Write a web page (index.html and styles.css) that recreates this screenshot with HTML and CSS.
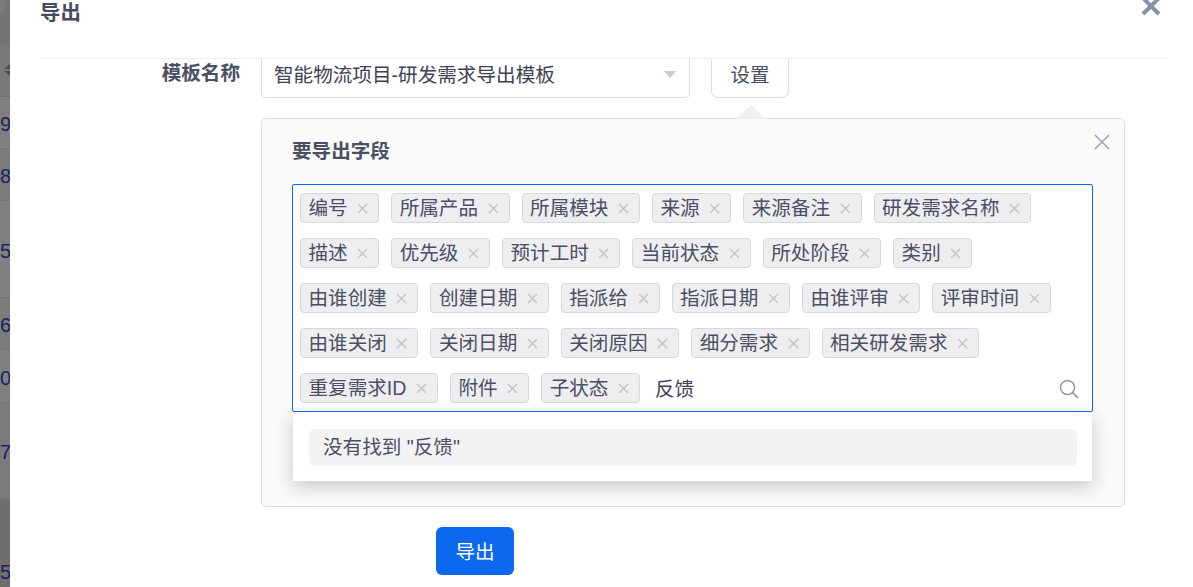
FILE: index.html
```html
<!DOCTYPE html>
<html lang="zh">
<head>
<meta charset="utf-8">
<title>导出</title>
<link rel="stylesheet" href="styles.css">
</head>
<body>
<div class="page">
  <aside class="backdrop">
    <div class="bd-top"><i class="avatar"></i></div>
    <div class="bd-head"><i class="sort-up"></i><i class="sort-down"></i></div>
    <div class="bd-row h52">9</div>
    <div class="bd-row h52 alt">8</div>
    <div class="bd-row h97">5</div>
    <div class="bd-row h52 alt">6</div>
    <div class="bd-row h53">0</div>
    <div class="bd-row h96 alt">7</div>
    <div class="bd-row last">5</div>
  </aside>
  <main class="modal">
    <header class="modal-head">
      <h1 class="modal-title">导出</h1>
      <svg class="modal-close" viewBox="0 0 20 20" width="20" height="20"><path d="M2 1 18 17M18 1 2 17" fill="none" stroke="#8a90a5" stroke-width="4"/></svg>
    </header>
    <div class="form">
      <div class="form-label">模板名称</div>
      <div class="form-value template-row">
        <div class="select"><span>智能物流项目-研发需求导出模板</span><i class="caret"></i></div>
        <button class="btn-setting" type="button">设置</button>
      </div>
      <div class="form-value second">
        <section class="panel">
          <i class="panel-arrow"></i>
          <svg class="panel-close" viewBox="0 0 16 16" width="16" height="16"><path d="M1 1 15 15M15 1 1 15" fill="none" stroke="#9ea3b2" stroke-width="1.5"/></svg>
          <h2 class="panel-title">要导出字段</h2>
          <div class="picker">
            <div class="tags">
              <span class="tag">编号<svg class="x" viewBox="0 0 11 11"><path d="M1 1 10 10M10 1 1 10"/></svg></span>
              <span class="tag">所属产品<svg class="x" viewBox="0 0 11 11"><path d="M1 1 10 10M10 1 1 10"/></svg></span>
              <span class="tag">所属模块<svg class="x" viewBox="0 0 11 11"><path d="M1 1 10 10M10 1 1 10"/></svg></span>
              <span class="tag">来源<svg class="x" viewBox="0 0 11 11"><path d="M1 1 10 10M10 1 1 10"/></svg></span>
              <span class="tag">来源备注<svg class="x" viewBox="0 0 11 11"><path d="M1 1 10 10M10 1 1 10"/></svg></span>
              <span class="tag">研发需求名称<svg class="x" viewBox="0 0 11 11"><path d="M1 1 10 10M10 1 1 10"/></svg></span>
              <span class="tag">描述<svg class="x" viewBox="0 0 11 11"><path d="M1 1 10 10M10 1 1 10"/></svg></span>
              <span class="tag">优先级<svg class="x" viewBox="0 0 11 11"><path d="M1 1 10 10M10 1 1 10"/></svg></span>
              <span class="tag">预计工时<svg class="x" viewBox="0 0 11 11"><path d="M1 1 10 10M10 1 1 10"/></svg></span>
              <span class="tag">当前状态<svg class="x" viewBox="0 0 11 11"><path d="M1 1 10 10M10 1 1 10"/></svg></span>
              <span class="tag">所处阶段<svg class="x" viewBox="0 0 11 11"><path d="M1 1 10 10M10 1 1 10"/></svg></span>
              <span class="tag">类别<svg class="x" viewBox="0 0 11 11"><path d="M1 1 10 10M10 1 1 10"/></svg></span>
              <span class="tag">由谁创建<svg class="x" viewBox="0 0 11 11"><path d="M1 1 10 10M10 1 1 10"/></svg></span>
              <span class="tag">创建日期<svg class="x" viewBox="0 0 11 11"><path d="M1 1 10 10M10 1 1 10"/></svg></span>
              <span class="tag">指派给<svg class="x" viewBox="0 0 11 11"><path d="M1 1 10 10M10 1 1 10"/></svg></span>
              <span class="tag">指派日期<svg class="x" viewBox="0 0 11 11"><path d="M1 1 10 10M10 1 1 10"/></svg></span>
              <span class="tag">由谁评审<svg class="x" viewBox="0 0 11 11"><path d="M1 1 10 10M10 1 1 10"/></svg></span>
              <span class="tag">评审时间<svg class="x" viewBox="0 0 11 11"><path d="M1 1 10 10M10 1 1 10"/></svg></span>
              <span class="tag">由谁关闭<svg class="x" viewBox="0 0 11 11"><path d="M1 1 10 10M10 1 1 10"/></svg></span>
              <span class="tag">关闭日期<svg class="x" viewBox="0 0 11 11"><path d="M1 1 10 10M10 1 1 10"/></svg></span>
              <span class="tag">关闭原因<svg class="x" viewBox="0 0 11 11"><path d="M1 1 10 10M10 1 1 10"/></svg></span>
              <span class="tag">细分需求<svg class="x" viewBox="0 0 11 11"><path d="M1 1 10 10M10 1 1 10"/></svg></span>
              <span class="tag">相关研发需求<svg class="x" viewBox="0 0 11 11"><path d="M1 1 10 10M10 1 1 10"/></svg></span>
              <span class="tag">重复需求ID<svg class="x" viewBox="0 0 11 11"><path d="M1 1 10 10M10 1 1 10"/></svg></span>
              <span class="tag">附件<svg class="x" viewBox="0 0 11 11"><path d="M1 1 10 10M10 1 1 10"/></svg></span>
              <span class="tag">子状态<svg class="x" viewBox="0 0 11 11"><path d="M1 1 10 10M10 1 1 10"/></svg></span>
              <span class="typed">反馈</span>
            </div>
            <svg class="search" viewBox="0 0 20 20" width="20" height="20"><circle cx="8.5" cy="8.5" r="7" fill="none" stroke="#9298aa" stroke-width="1.5"/><path d="M13.6 13.6 19 19" fill="none" stroke="#9298aa" stroke-width="1.7"/></svg>
            <div class="dropdown"><div class="no-result">没有找到 "反馈"</div></div>
          </div>
        </section>
        <button class="btn-export" type="button">导出</button>
      </div>
    </div>
  </main>
</div>
</body>
</html>
```

FILE: styles.css
```css
* { box-sizing: border-box; }
html, body { margin: 0; height: 100%; overflow: hidden; background: #fff; }
body { font-family: "Liberation Sans", "Noto Sans CJK SC", sans-serif; font-size: 19.6px; color: #4a4f63; }
.page { display: flex; width: 1193px; height: 587px; overflow: hidden; }

.backdrop { width: 10px; flex: none; overflow: hidden; background: #7f7f7f; color: #16235f; white-space: nowrap; }
.bd-top { height: 45px; background: #737373; overflow: hidden; }
.avatar { display: block; width: 20px; height: 20px; margin: -5px 0 0 -14px; border-radius: 50%; background: #7c7c7c; }
.bd-head { height: 52px; padding-top: 17px; background: #7a7a7a; border-bottom: 1px solid #6e6e6e; overflow: hidden; }
.bd-head i { display: block; width: 0; margin-left: 4px; border-left: 8px solid transparent; border-right: 8px solid transparent; }
.sort-up { border-bottom: 7px solid #4d4d4d; margin-bottom: 2px; }
.sort-down { border-top: 7px solid #4d4d4d; }
.bd-row { display: flex; align-items: center; padding-top: 3px; border-bottom: 1px solid #747474; background: #808080; font-size: 20px; line-height: 1; }
.bd-row.alt { background: #7b7b7b; }
.h52 { height: 52px; }
.h53 { height: 53px; }
.h96 { height: 96px; }
.h97 { height: 97px; }
.last { height: 144px; background: #6f6f6f; }

.modal { flex: 1; padding: 0 28px 0 30px; background: #fff; min-width: 0; }
.modal-head { display: flex; justify-content: space-between; height: 59px; border-bottom: 1px solid #eeeef0; overflow: hidden; }
.modal-title { margin: 0; font-size: 20.4px; font-weight: 700; line-height: 27px; color: #474b5d; }
.modal-close { margin: -3px 4px 0 0; flex: none; }

.form { display: grid; grid-template-columns: 200px 864px; column-gap: 21px; }
.form-label { text-align: right; font-weight: 700; line-height: 28px; color: #4a4f63; }
.template-row { display: flex; gap: 21px; height: 39px; }
.select { display: flex; align-items: center; justify-content: space-between; width: 429px; padding: 0 13px 9px 12px; border: 1px solid #dcdde3; border-top: 0; border-radius: 0 0 5px 5px; background: #fff; color: #3d4154; }
.caret { width: 0; margin-top: 1px; border-left: 6px solid transparent; border-right: 6px solid transparent; border-top: 7px solid #c6cad5; }
.btn-setting { width: 78px; padding: 0 0 9px; border: 1px solid #dcdde3; border-top: 0; border-radius: 0 0 7px 7px; background: #fff; color: #4a4f63; font: inherit; }

.second { grid-column: 2; }
.panel { position: relative; height: 389px; margin-top: 20px; padding: 20px 31px 0 30px; border: 1px solid #dcdde0; border-radius: 5px; background: #fafafa; }
.panel-arrow { position: absolute; left: 474px; top: -14px; width: 0; border-left: 15px solid transparent; border-right: 15px solid transparent; border-bottom: 14px solid #f0f0f0; }
.panel-close { position: absolute; top: 15px; right: 14px; }
.panel-title { margin: 0 0 20px; font-size: 19.6px; font-weight: 700; line-height: 25px; color: #4a4f63; }

.picker { position: relative; height: 228px; padding: 8px 7px; border: 1px solid #0b68ef; border-radius: 2px; background: #fff; }
.tags { display: flex; flex-wrap: wrap; gap: 15px 12px; }
.tag { display: inline-flex; align-items: center; height: 30px; padding: 0 10px 0 7.5px; border: 1px solid #d6d7e1; border-radius: 4px; background: #eeeef0; line-height: 28px; color: #4a4f63; white-space: nowrap; }
.x { width: 11px; height: 11px; margin-left: 9.5px; flex: none; }
.x path { fill: none; stroke: #c0c1c6; stroke-width: 1.3; }
.typed { margin-left: 3px; padding-top: 1px; line-height: 30px; color: #3d4154; }
.search { position: absolute; right: 13px; bottom: 12px; }
.dropdown { position: absolute; z-index: 2; top: 227px; left: 0; right: 0; height: 69px; padding: 17px 15px 0 16px; background: #fff; box-shadow: 0 6px 18px rgba(0, 0, 0, 0.2); }
.no-result { height: 37px; padding-left: 14px; border-radius: 6px; background: #f3f3f3; line-height: 36px; color: #4a4f63; }

.btn-export { display: block; width: 78px; height: 48px; margin: 20px 0 0 175px; padding: 0 0 2px; border: 0; border-radius: 6px; background: #0b68ef; color: #fff; font: inherit; }
```
